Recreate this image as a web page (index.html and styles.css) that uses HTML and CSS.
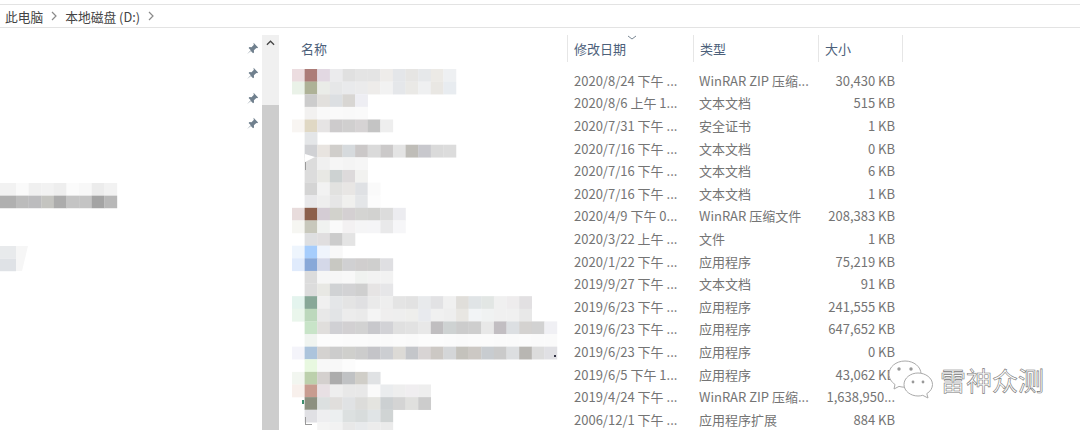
FILE: index.html
```html
<!DOCTYPE html>
<html lang="zh-CN">
<head>
  <meta charset="UTF-8">
  <title>本地磁盘 (D:)</title>
  <link rel="stylesheet" href="styles.css">
</head>
<body>
  <nav class="crumbs">
    <span>此电脑</span>
    <svg class="crumb-arrow" viewBox="0 0 8 10"><path d="M2 1l4 4-4 4"/></svg>
    <span>本地磁盘 (D:)</span>
    <svg class="crumb-arrow" viewBox="0 0 8 10"><path d="M2 1l4 4-4 4"/></svg>
  </nav>

  <div class="explorer">
    <aside class="sidebar">
      <div class="pins">
        <svg class="pin" viewBox="0 0 12 12"><path d="M7 .8l4.2 4.2-1 .8-.7-.3-2.2 2.2.1 1.9-.9.8-2-2L1 11l3.400-3.400-2-2 .8-.9 1.900.1 2.200-2.200-.3-.7z"/></svg>
        <svg class="pin" viewBox="0 0 12 12"><path d="M7 .8l4.2 4.2-1 .8-.7-.3-2.2 2.2.1 1.9-.9.8-2-2L1 11l3.400-3.400-2-2 .8-.9 1.900.1 2.200-2.200-.3-.7z"/></svg>
        <svg class="pin" viewBox="0 0 12 12"><path d="M7 .8l4.2 4.2-1 .8-.7-.3-2.2 2.2.1 1.9-.9.8-2-2L1 11l3.400-3.400-2-2 .8-.9 1.900.1 2.200-2.200-.3-.7z"/></svg>
        <svg class="pin" viewBox="0 0 12 12"><path d="M7 .8l4.2 4.2-1 .8-.7-.3-2.2 2.2.1 1.9-.9.8-2-2L1 11l3.400-3.400-2-2 .8-.9 1.900.1 2.200-2.200-.3-.7z"/></svg>
      </div>
      <canvas id="side-blur" class="side-blur" width="130" height="100"></canvas>
    </aside>

    <div class="scrollbar">
      <svg class="scroll-up" viewBox="0 0 10 6"><path d="M1 5l4-4 4 4"/></svg>
      <div class="thumb"></div>
    </div>

    <main class="list">
      <div class="head">
        <div class="col col-name">名称</div>
        <div class="col col-date">修改日期
          <svg class="sort" viewBox="0 0 10 5"><path d="M1 1l4 3 4-3"/></svg>
        </div>
        <div class="col col-type">类型</div>
        <div class="col col-size">大小</div>
      </div>

      <div class="body">
        <canvas id="name-blur" class="name-blur" width="288" height="361"></canvas>
        <div class="rows">
          <div class="row"><span>2020/8/24 下午 ...</span><span>WinRAR ZIP 压缩...</span><span>30,430 KB</span></div>
          <div class="row"><span>2020/8/6 上午 1...</span><span>文本文档</span><span>515 KB</span></div>
          <div class="row"><span>2020/7/31 下午 ...</span><span>安全证书</span><span>1 KB</span></div>
          <div class="row"><span>2020/7/16 下午 ...</span><span>文本文档</span><span>0 KB</span></div>
          <div class="row"><span>2020/7/16 下午 ...</span><span>文本文档</span><span>6 KB</span></div>
          <div class="row"><span>2020/7/16 下午 ...</span><span>文本文档</span><span>1 KB</span></div>
          <div class="row"><span>2020/4/9 下午 0...</span><span>WinRAR 压缩文件</span><span>208,383 KB</span></div>
          <div class="row"><span>2020/3/22 上午 ...</span><span>文件</span><span>1 KB</span></div>
          <div class="row"><span>2020/1/22 下午 ...</span><span>应用程序</span><span>75,219 KB</span></div>
          <div class="row"><span>2019/9/27 下午 ...</span><span>文本文档</span><span>91 KB</span></div>
          <div class="row"><span>2019/6/23 下午 ...</span><span>应用程序</span><span>241,555 KB</span></div>
          <div class="row"><span>2019/6/23 下午 ...</span><span>应用程序</span><span>647,652 KB</span></div>
          <div class="row"><span>2019/6/23 下午 ...</span><span>应用程序</span><span>0 KB</span></div>
          <div class="row"><span>2019/6/5 下午 1...</span><span>应用程序</span><span>43,062 KB</span></div>
          <div class="row"><span>2019/4/24 下午 ...</span><span>WinRAR ZIP 压缩...</span><span>1,638,950...</span></div>
          <div class="row"><span>2006/12/1 下午 ...</span><span>应用程序扩展</span><span>884 KB</span></div>
        </div>
      </div>
    </main>
  </div>

  <div class="watermark">
    <svg class="wechat" viewBox="0 0 46 40">
      <path class="bubble" d="M17 1C8 1 1 7 1 14c0 4.500 2.500 8 6 10.500L6 29l5-2.600c2 .6 4 .8 6 .8 9 0 16-6 16-13.200S26 1 17 1z"/>
      <path class="bubble" d="M30 13c-7.500 0-14 5-14 11.500S22.500 36 30 36c1.700 0 3.200-.2 4.700-.7L40 38l-1.200-4.400C42.500 31.500 44.500 28 44.500 24.500 44.500 18 37.500 13 30 13z"/>
      <circle class="eye" cx="11" cy="9" r="1.700"/>
      <circle class="eye" cx="23" cy="9" r="1.700"/>
      <circle class="eye" cx="25" cy="22" r="1.400"/>
      <circle class="eye" cx="35" cy="22" r="1.400"/>
    </svg>
    <span class="mark-text">雷神众测</span>
  </div>

  <script src="mosaic.js"></script>
</body>
</html>
```

FILE: styles.css
```css
* {
  box-sizing: border-box;
}
html, body {
  height: 430px;
  overflow: hidden;
}
body {
  margin: 0;
  padding-top: 4px;
  position: relative;
  background: #fff;
  font-family: "Noto Sans CJK SC", "Noto Sans", sans-serif;
  font-size: 13px;
  color: #747474;
}

.crumbs {
  height: 24px;
  padding-left: 5px;
  display: flex;
  align-items: center;
  gap: 6.5px;
  border-top: 1px solid #e3e3e3;
  border-bottom: 1px solid #e3e3e3;
  font-size: 12.75px;
  color: #444;
}
.crumb-arrow {
  width: 8px;
  height: 10px;
  margin-right: 1px;
  fill: none;
  stroke: #8a8a8a;
  stroke-width: 1.2;
}

.explorer {
  height: 402px;
  display: flex;
}

.sidebar {
  width: 262px;
  position: relative;
}
.pins {
  padding: 14px 3px 0 0;
  display: flex;
  flex-direction: column;
  align-items: flex-end;
  gap: 12px;
}
.pin {
  width: 13px;
  height: 13px;
  fill: #70808e;
}
.side-blur {
  position: absolute;
  left: 0;
  top: 155px;
}

.scrollbar {
  width: 17px;
  margin-top: 7px;
  display: flex;
  flex-direction: column;
  background: #f0f0f0;
}
.scroll-up {
  width: 9px;
  height: 6px;
  margin: 5px 0 0 4px;
  fill: none;
  stroke: #444;
  stroke-width: 1.4;
}
.thumb {
  margin-top: 59px;
  flex: 1;
  background: #cdcdcd;
}

.list {
  flex: 1;
}
.head {
  height: 41px;
  padding-top: 7px;
  display: flex;
  color: #4c607a;
}
.col {
  height: 27px;
  padding: 4px 0 0 6px;
  border-right: 1px solid #e6e6e6;
  position: relative;
}
.col-name {
  width: 289px;
  padding-left: 22px;
}
.col-date {
  width: 126px;
}
.col-type {
  width: 125px;
}
.col-size {
  width: 84px;
}
.sort {
  position: absolute;
  left: 59px;
  top: 0;
  width: 10px;
  height: 5px;
  fill: none;
  stroke: #7a8794;
  stroke-width: 1;
}

.body {
  display: flex;
}
.name-blur {
  width: 288px;
  height: 361px;
  filter: blur(0.5px);
}
.rows {
  width: 328px;
}
.row {
  height: 22.6px;
  display: grid;
  grid-template-columns: 125px 125px 71px;
  align-items: center;
  white-space: nowrap;
  padding-left: 7px;
}
.row span:last-child {
  text-align: right;
}

.watermark {
  position: absolute;
  left: 888px;
  top: 360px;
  display: flex;
  align-items: center;
  gap: 6px;
}
.wechat {
  width: 46px;
  height: 40px;
}
.bubble {
  fill: #fff;
  stroke: #aaa;
  stroke-width: 1;
}
.eye {
  fill: #999;
}
.mark-text {
  font-size: 26px;
  line-height: 36px;
  color: #fff;
  -webkit-text-stroke: 0.6px #777;
}
```

FILE: mosaic.js
```js
// pixelated file names, one entry per mosaic row: [first column, colours]
const NAME_ROWS = [
  [0, 'ecdde0 ac7c78 e2d8e2 ebebed e0e0e0 e4e4e4 e4e4e4 eeecea e4e6e9 e6e5e3 e6e8ea eceae6 eef0f2'],
  [0, 'eaf2e8 aeb297 eaece8 e6e7e8 e9eaec ebebec eeecea f2f2f2 e5e7ea eae9e6 eff0f1 e9e7e3 e8ecf0'],
  [1, 'cccccc e2e0dd dcdfe2 d8d6d3 eeeef3'],
  [1, 'f2f1f0 f9f9f9 fafafa f9f9f9 fafafa'],
  [0, 'f8f5f2 e0d8c4 e6e4e4 cdcbcc d0cfcf d6d3d4 c4c4c4 eeeeee'],
  [1, 'e4e6e8'],
  [1, 'd0d1d4 e8e4e0 d0cecb d6dadd cbc8c8 dadada cbc9c9 e4e4e4 bfbdb8 c8c8cd dadada dcdcdc'],
  [1, 'dcdcdc f0f0f0 f6f6f6 f4f4f4 f6f6f6'],
  [1, 'dcdcdc e8e8e4 cdd2d2 dddadb f2f2f0'],
  [1, 'd4d4d4 f2f2f2 e2e2e0 e8e6e4 dfe1e4 fafafa'],
  [1, 'e8e8ea eeeeee e6e6e6 f0f0ee e4e6e8 fcfcfc'],
  [0, 'e8dcdc 8c5f4c d4ccd4 d2d2cc d4d0d2 d4d4d2 d2d2d0 dcdcdc ececf0'],
  [0, 'f6f6f2 c8c8bc f0f2f0 fafafa f3f1f2 f5f5f6 f5f5f7 e9e9ea f6f6f8'],
  [1, 'dedfe1 e0dedf cccccc e4e4e4'],
  [0, 'eef5fd a6cdfc eff4fc f8f8f8'],
  [0, 'e0ebfc 88a8d8 d4d8e8 c8c8c2 d0d0d2 d0cece cfcfce dfdfe2'],
  [1, 'dcdcdc f6f6f6 f6f6f6 f8f8f8 f0f2f0 f2f2f2 f2f2f2'],
  [1, 'dcdcdc e8e8e4 d0d2d4 d2d2d4 cfcfcf e6e4e4 e6e6e8'],
  [0, 'e4f4ee 88a898 f0f0f0 e4e6e8 e4e4e4 e0e0e2 eaeaea eeeeee e4e4e4 e2e2e2 e8eaec e2e2e4 f0f0f0 e0deda e0e4e6 e2e6e4 f0f0f0 eeeced e2e0e2'],
  [0, 'eaf6ec bcd8bc e8e8e8 e2e4e6 ececec eaeaea f4f4f4 efeeee eeeeee eeeeec e8eaee f0f0f0 eeeeee e8e6e2 f2f4f6 f0f2f2 f0f0f0 f0f0f0 e8e8e8'],
  [1, 'c8e4c8 e0dedc d0d0d4 d2d0d2 d2d2d2 c8c8cc d2d2d6 e0e0e0 e2e2e2 e8e8e8 c0bec0 ced2d2 cccccc cecece e8e8e8 c2bec2 dcdfe2 d4d2d0 d2d2d2 f0f0f4'],
  [1, 'f0f4f0 fcfcfc fcfcfc fbfbfb fbfbfb fafafa fafafa fbfbfb fafafa fcfcfc fcfcfc fbfbfb fafafa fbfbfb fbfbfb fafafa fafafa fbfbfb fafafa fafafa'],
  [0, 'f4f4fa acc4dc d4d2d0 cccccc cfcfcc cccccc c4c4c8 ccced2 dcdad6 c4c6ca d8d4d4 ccc8c4 d4d6d8 c4c2bc ccc8c4 c8ccd0 cacaca dcdee0 b8b6b2 dcdcdc e0e0e4'],
  [1, 'e8f8e0 f8f8f8 f8f8f8 fcfcfc'],
  [0, 'f2f6f0 bcd0ac d4d0ce acacac c0c2c4 d0cec8 e0e2e4'],
  [0, 'f8f0ec c89c90 e8e0e4 eeeeee e8e8e8 e8e8e8 fafafa eaecee eeeeee f0eef0 eeeeee'],
  [1, '8c9080 dce0e0 e0dedc e0e2e4 dcdcda e4e4e0 ccd0d2 d4d4d4 e0e0de cccccc'],
  [1, 'e0e0e4 eeeef0 eceff0 dce0e0 d8dcdc e0e4e6 d0d4d4'],
  [2, 'f4f4f4 f2f2f2 e8e8e8 e8eaec ececec ebebeb']
];

const CELL = 12.62;

function drawNames() {
  const ctx = document.getElementById('name-blur').getContext('2d');
  NAME_ROWS.forEach(function (row, r) {
    row[1].split(' ').forEach(function (hex, i) {
      ctx.fillStyle = '#' + hex;
      ctx.fillRect(13 + (row[0] + i) * CELL, r * CELL, CELL + 0.2, CELL + 0.2);
    });
  });

  // bits of the file icons that show through
  ctx.fillStyle = '#fff';
  ctx.beginPath();
  ctx.moveTo(26, 85);
  ctx.lineTo(36, 88);
  ctx.lineTo(26, 93);
  ctx.fill();
  ctx.fillStyle = '#9a9a9a';
  ctx.fillRect(26, 93, 1, 8);
  ctx.fillRect(26, 348, 1, 8);
  ctx.fillRect(26, 355, 7, 1);
  ctx.fillStyle = '#3e8e6e';
  ctx.fillRect(23, 331, 2, 4);
  ctx.fillStyle = '#334';
  ctx.fillRect(275, 286, 2, 2);
}

function drawSide() {
  const ctx = document.getElementById('side-blur').getContext('2d');
  const top = 'f2f2f2 fafafa f0f0f0 f2f2f2 eeeeee fbfbfb f8f8f8 ececec f2f2f2'.split(' ');
  const low = 'b0b0b0 bcbcbc bcbcbe c4c4c0 acacac c4c4c4 c4c4c4 a4a4a4 b8b8b8'.split(' ');
  top.forEach(function (hex, i) {
    const x = i === 0 ? 0 : 3.4 + i * CELL;
    const w = i === 0 ? 16.1 : CELL + 0.2;
    ctx.fillStyle = '#' + hex;
    ctx.fillRect(x, 0, w, CELL);
    ctx.fillStyle = '#' + low[i];
    ctx.fillRect(x, CELL, w, CELL);
  });

  ctx.fillStyle = '#e8eaec';
  ctx.fillRect(0, 63, 16, CELL);
  ctx.fillStyle = '#dfe2e6';
  ctx.fillRect(0, 75.6, 16, CELL);
  ctx.fillStyle = '#f6f6f6';
  ctx.beginPath();
  ctx.moveTo(16, 63);
  ctx.lineTo(28, 63);
  ctx.lineTo(22, 88);
  ctx.lineTo(16, 88);
  ctx.fill();
}

drawNames();
drawSide();
```
